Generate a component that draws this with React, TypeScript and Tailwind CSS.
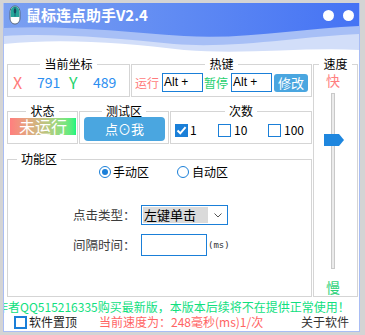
import React from "react";

function Group({
  title,
  className,
  legendClass,
  children,
}: {
  title: string;
  className: string;
  legendClass?: string;
  children?: React.ReactNode;
}) {
  return (
    <fieldset className={`border border-[#d5d5d5] min-w-0 shrink-0 ${className}`}>
      <legend className={`px-[4px] text-[12px] leading-[14px] text-black ${legendClass ?? "mx-auto"}`}>{title}</legend>
      {children}
    </fieldset>
  );
}

function Box({ checked, thick }: { checked?: boolean; thick?: boolean }) {
  if (checked) {
    return (
      <span className="w-[13px] h-[13px] bg-[#1a7fd8] flex items-center justify-center shrink-0">
        <svg width="11" height="11" viewBox="0 0 11 11">
          <path d="M1.5 5.5 L4.3 8.3 L9.6 2.2" stroke="#fff" strokeWidth="2" fill="none" />
        </svg>
      </span>
    );
  }
  return (
    <span
      className={`w-[13px] h-[13px] bg-white shrink-0 ${thick ? "border-2 border-[#1a7fd8]" : "border border-[#1a7fd8]"}`}
    />
  );
}

function Radio({ checked }: { checked?: boolean }) {
  return (
    <span className="w-[12px] h-[12px] rounded-full border border-[#1a7fd8] bg-white flex items-center justify-center shrink-0">
      {checked ? <span className="w-[6px] h-[6px] rounded-full bg-[#1a7fd8]" /> : null}
    </span>
  );
}

export default function App() {
  return (
    <div className="w-[365px] h-[335px] bg-[#d4d4d4] pl-[3px] pt-[3px] overflow-hidden font-['Noto_Sans_CJK_SC',sans-serif]">
      <div className="w-[357px] h-[329px] bg-white border-x border-b border-[#a9bdf4] flex flex-col overflow-hidden">
        {/* header */}
        <div className="relative h-[54px] shrink-0">
          <svg className="absolute inset-0" width="355" height="54" viewBox="0 0 355 54">
            <defs>
              <linearGradient id="hg" x1="0" y1="0" x2="1" y2="0">
                <stop offset="0" stopColor="#7ba0f1" />
                <stop offset="0.5" stopColor="#5f8af3" />
                <stop offset="1" stopColor="#4573f4" />
              </linearGradient>
            </defs>
            <rect x="0" y="0" width="355" height="54" fill="url(#hg)" />
            <path d="M0,25 C60,22 120,29 180,33 C240,37 300,25 355,23 L355,54 L0,54 Z" fill="#a7bff6" />
            <path d="M0,33 C50,30 110,35 170,41 C230,46 300,33 355,31 L355,54 L0,54 Z" fill="#d2def9" />
            <path d="M0,41 C60,35 120,40 180,47 C240,52 300,44 355,47 L355,54 L0,54 Z" fill="#ffffff" />
          </svg>
          <div className="relative flex items-center justify-between h-[20px] mt-[2px] pl-[5px] pr-[5px]">
            <div className="flex items-center gap-[5px]">
              <svg width="12" height="20" viewBox="0 0 12 20">
                <path d="M6 1 C2.5 1 1 4 1 8 L1 13 C1 16.5 3 19 6 19 C9 19 11 16.5 11 13 L11 8 C11 4 9.5 1 6 1Z" fill="#fff" stroke="#55657c" strokeWidth="1" />
                <path d="M6 1.6 C3 1.6 1.6 4 1.6 8 L1.6 12 L10.4 12 L10.4 8 C10.4 4 9 1.6 6 1.6Z" fill="#27a69a" />
                <line x1="6" y1="2" x2="6" y2="11.5" stroke="#1b5f70" strokeWidth="1" />
                <ellipse cx="6" cy="6" rx="1.3" ry="2.4" fill="#1b4a60" />
              </svg>
              <span className="text-white font-bold text-[15px] leading-[20px]">鼠标连点助手V2.4</span>
            </div>
            <div className="flex items-center gap-[9px]">
              <span className="w-[11px] h-[11px] rounded-full bg-white" />
              <span className="w-[11px] h-[11px] rounded-full bg-white" />
            </div>
          </div>
        </div>

        {/* body */}
        <div className="flex pl-[3px] gap-[1px] shrink-0">
          <div className="w-[305px] flex flex-col shrink-0">
            {/* row 1 */}
            <div className="flex gap-[1px]">
              <Group title="当前坐标" className="w-[123px] h-[40px]">
                <div className="flex items-center h-[19px] mt-[2px] pl-[5px] leading-[19px]">
                  <span className="w-[24px] text-[16px] text-[#ff7a7a]">X</span>
                  <span className="w-[32px] text-[14px] text-[#2b8ef0]">791</span>
                  <span className="w-[24px] text-[16px] text-[#22d36b]">Y</span>
                  <span className="text-[14px] text-[#2b8ef0]">489</span>
                </div>
              </Group>
              <Group title="热键" className="w-[181px] h-[40px]">
                <div className="flex items-center h-[19px] mt-[2px] pl-[3px]">
                  <span className="w-[27px] text-[12px] leading-[19px] text-[#ff7b7b]">运行</span>
                  <span className="w-[41px] h-[19px] border border-[#1a7fd8] pl-[1px] text-[12px] leading-[17px] text-black font-['Liberation_Sans',sans-serif]">Alt +</span>
                  <span className="w-[28px] pl-[1px] text-[12px] leading-[19px] text-[#1fd070]">暂停</span>
                  <span className="w-[41px] h-[19px] border border-[#1a7fd8] pl-[1px] text-[12px] leading-[17px] text-black font-['Liberation_Sans',sans-serif]">Alt +</span>
                  <span className="ml-[2px] w-[34px] h-[18px] rounded-[3px] bg-[#4aa6e0] text-white text-[13px] leading-[18px] text-center">修改</span>
                </div>
              </Group>
            </div>

            {/* row 2 */}
            <div className="flex gap-[1px] mt-[7px]">
              <Group title="状态" className="w-[71px] h-[40px]">
                <div className="ml-[2px] mt-[0px] w-[66px] h-[17px] bg-linear-to-r from-[#ff7e7e] to-[#12f57e] text-white text-[16px] leading-[17px] text-center">
                  未运行
                </div>
              </Group>
              <Group title="测试区" className="w-[90px] h-[40px]">
                <div className="ml-[4px] -mt-[1px] w-[81px] h-[24px] rounded-[4px] bg-[#4aa6e0] text-white text-[13px] leading-[24px] text-center">
                  点⊙我
                </div>
              </Group>
              <Group title="次数" className="w-[142px] h-[40px]">
                <div className="flex items-center h-[24px] pl-[4px] text-[12px] leading-[14px] text-black">
                  <span className="w-[43px] flex items-center">
                    <Box checked />
                    <span className="ml-[2px]">1</span>
                  </span>
                  <span className="w-[50px] flex items-center">
                    <Box />
                    <span className="ml-[3px]">10</span>
                  </span>
                  <span className="flex items-center">
                    <Box />
                    <span className="ml-[3px]">100</span>
                  </span>
                </div>
              </Group>
            </div>

            {/* row 3 */}
            <div className="mt-[8px]">
              <Group title="功能区" className="w-[305px] h-[145px]" legendClass="ml-[9px] px-[3px]">
                <div className="flex items-center h-[12px] pl-[91px] text-[12px] leading-[12px] text-black">
                  <span className="w-[78px] flex items-center">
                    <Radio checked />
                    <span className="ml-[2px]">手动区</span>
                  </span>
                  <span className="flex items-center">
                    <Radio />
                    <span className="ml-[3px]">自动区</span>
                  </span>
                </div>
                <div className="flex items-center mt-[27px] h-[20px] pl-[65px]">
                  <span className="w-[68px] text-[12.5px] leading-[20px] text-[#3c3c3c]">点击类型：</span>
                  <div className="w-[87px] h-[20px] border border-[#1a7fd8] p-[1px] flex items-center">
                    <span className="w-[65px] h-[16px] bg-[#dadada] pl-[1px] text-[13px] leading-[16px] text-black">左键单击</span>
                    <svg className="ml-[6px]" width="8" height="5" viewBox="0 0 8 5">
                      <path d="M0.5 0.5 L4 4 L7.5 0.5" stroke="#555" strokeWidth="1" fill="none" />
                    </svg>
                  </div>
                </div>
                <div className="flex items-center mt-[9px] h-[22px] pl-[65px]">
                  <span className="w-[68px] text-[12.5px] leading-[20px] text-[#3c3c3c]">间隔时间：</span>
                  <span className="w-[66px] h-[22px] border border-[#1a7fd8] bg-white" />
                  <span className="ml-[1px] text-[9px] leading-[12px] text-[#333] font-['DejaVu_Sans_Mono',monospace]">(ms)</span>
                </div>
              </Group>
            </div>
          </div>

          {/* speed */}
          <Group title="速度" className="w-[45px] h-[240px]">
            <div className="flex flex-col items-center pr-[5px]">
              <span className="mt-[2px] text-[14px] leading-[14px] text-[#ff8080]">快</span>
              <div className="relative mt-[6px] w-[4px] h-[176px] border border-[#c9c9c9] bg-[#ebebeb]">
                <svg className="absolute top-[40px] left-[-8px]" width="20" height="12" viewBox="0 0 20 12">
                  <path d="M0 0 L15 0 L20 6 L15 12 L0 12 Z" fill="#1e86de" />
                </svg>
              </div>
              <span className="mt-[11px] text-[14px] leading-[14px] text-[#2fd27a]">慢</span>
            </div>
          </Group>
        </div>

        {/* footer message */}
        <div className="mt-[2px] h-[15px] overflow-hidden whitespace-nowrap text-[12px] leading-[15px] text-[#10e07e] shrink-0">
          <span className="inline-block ml-[-8px]">作者QQ515216335购买最新版，本版本后续将不在提供正常使用！</span>
        </div>

        {/* bottom row */}
        <div className="h-[16px] flex items-center pl-[10px] pr-[10px] text-[12px] leading-[16px] shrink-0">
          <Box thick />
          <span className="ml-[2px] text-[#222]">软件置顶</span>
          <span className="ml-[22px] text-[#ff6464]">当前速度为：248毫秒(ms)1/次</span>
          <span className="ml-auto text-[#333]">关于软件</span>
        </div>
      </div>
    </div>
  );
}
